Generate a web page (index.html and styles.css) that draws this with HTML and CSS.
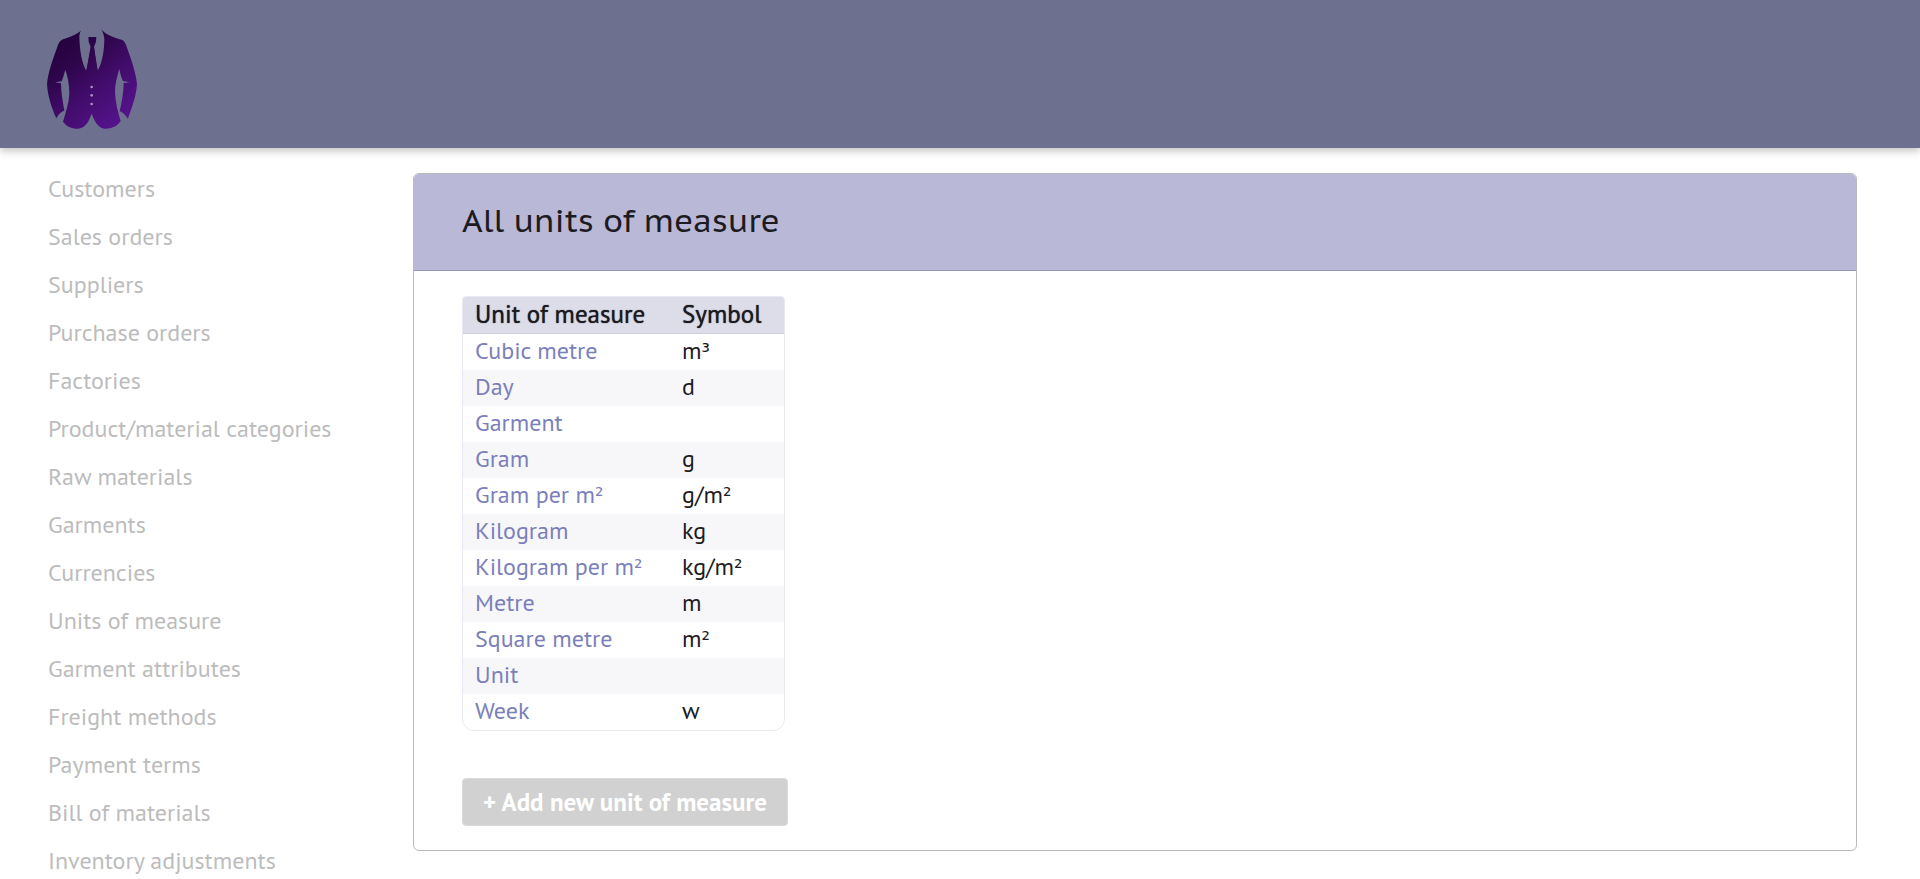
FILE: index.html
```html
<!DOCTYPE html>
<html lang="en">
<head>
<meta charset="utf-8">
<title>All units of measure</title>
<link rel="stylesheet" href="styles.css">
</head>
<body>
<header class="topbar">
  <a class="logo" href="#" aria-label="Home">
    <svg class="logo-art" viewBox="50 42 270 300" aria-hidden="true">
      <defs>
        <linearGradient id="cloth" gradientUnits="userSpaceOnUse" x1="80" y1="80" x2="270" y2="320">
          <stop offset="0" stop-color="#25023f"/>
          <stop offset=".25" stop-color="#2d0549"/>
          <stop offset=".6" stop-color="#420c6c"/>
          <stop offset="1" stop-color="#55138c"/>
        </linearGradient>
      </defs>
      <g fill="url(#cloth)">
        <path d="M156 42 C150 48 147 56 147 66 C148 104 154 144 168 167 C173 148 177 120 181 96 L175 80 L174 66 L198 66 L197 80 L191 96 C194 122 198 148 202 167 C216 144 222 104 222 72 C221 60 217 50 212 42 C226 60 252 68 274 74 C282 77 287 86 290 98 C302 132 315 166 320 206 C318 244 304 278 293 311 C286 304 280 292 268 289 C274 262 280 232 280 204 L298 202 L278 198 C272 186 270 176 267 162 C260 184 254 210 254 230 C255 262 263 292 271 318 C262 334 242 342 222 341 C200 336 192 316 184 296 C176 316 168 338 144 341 C126 342 108 334 98 320 C106 292 116 264 117 236 C117 208 112 184 105 164 C101 176 99 188 94 199 L74 202 L92 205 C92 234 98 262 102 287 C90 290 84 300 78 310 C64 278 52 244 50 206 C54 168 68 132 80 98 C84 86 88 77 98 73 C118 66 144 58 156 42 Z"/>
        <path d="M168 167 L181 96 L191 96 L202 167 L196 190 L174 190 Z"/>
      </g>
      <g fill="#a58fc4"><circle cx="184" cy="216" r="4"/><circle cx="184" cy="241" r="4"/><circle cx="184" cy="267" r="4"/></g>
    </svg>
  </a>
</header>
<div class="layout">
  <nav class="sidebar" aria-label="Main">
    <a href="#">Customers</a>
    <a href="#">Sales orders</a>
    <a href="#">Suppliers</a>
    <a href="#">Purchase orders</a>
    <a href="#">Factories</a>
    <a href="#">Product/material categories</a>
    <a href="#">Raw materials</a>
    <a href="#">Garments</a>
    <a href="#">Currencies</a>
    <a href="#">Units of measure</a>
    <a href="#">Garment attributes</a>
    <a href="#">Freight methods</a>
    <a href="#">Payment terms</a>
    <a href="#">Bill of materials</a>
    <a href="#">Inventory adjustments</a>
  </nav>
  <main class="panel">
    <div class="panel-head"><h1>All units of measure</h1></div>
    <div class="panel-body">
      <table class="units">
        <thead><tr><th scope="col">Unit of measure</th><th scope="col">Symbol</th></tr></thead>
        <tbody>
          <tr><td><a href="#">Cubic metre</a></td><td>m<span class="power">³</span></td></tr>
          <tr><td><a href="#">Day</a></td><td>d</td></tr>
          <tr><td><a href="#">Garment</a></td><td></td></tr>
          <tr><td><a href="#">Gram</a></td><td>g</td></tr>
          <tr><td><a href="#">Gram per m<span class="power">²</span></a></td><td>g/m<span class="power">²</span></td></tr>
          <tr><td><a href="#">Kilogram</a></td><td>kg</td></tr>
          <tr><td><a href="#">Kilogram per m<span class="power">²</span></a></td><td>kg/m<span class="power">²</span></td></tr>
          <tr><td><a href="#">Metre</a></td><td>m</td></tr>
          <tr><td><a href="#">Square metre</a></td><td>m<span class="power">²</span></td></tr>
          <tr><td><a href="#">Unit</a></td><td></td></tr>
          <tr><td><a href="#">Week</a></td><td>w</td></tr>
        </tbody>
      </table>
      <button class="add" type="button">+ Add new unit of measure</button>
    </div>
  </main>
</div>
</body>
</html>
```
FILE: styles.css
```css
* { box-sizing: border-box; }

body {
  margin: 0;
  background: #fff;
  color: #1c1b22;
  font-family: "PT Sans", "Noto Sans", sans-serif;
  font-size: 24px;
  line-height: 36px;
}

a { text-decoration: none; }

.topbar {
  display: flex;
  padding: 29px 47px 19px;
  background: #6d708f;
  box-shadow: 0 3px 8px rgba(60, 55, 45, 0.3);
}

.logo { display: flex; }
.logo-art { width: 90px; height: 100px; }

.layout {
  display: grid;
  grid-template-columns: 413px 1fr;
  align-items: start;
  padding-right: 63px;
}

.sidebar {
  display: flex;
  flex-direction: column;
  padding: 17px 0 0 48px;
}

.sidebar a {
  color: #bcbcbc;
  line-height: 48px;
  white-space: nowrap;
}

.panel {
  margin: 25px 0 29px;
  border: 1px solid #b9b9bf;
  border-radius: 6px;
  overflow: hidden;
}

.panel-head {
  padding: 22px 48px 26px;
  background: #b9b8d7;
  border-bottom: 1px solid #9795bd;
}

.panel-head h1 {
  margin: 0;
  font-family: "PT Sans Caption", "PT Sans", "Noto Sans", sans-serif;
  font-size: 32px;
  font-weight: 400;
  line-height: 48px;
}

.panel-body {
  display: flex;
  flex-direction: column;
  align-items: flex-start;
  gap: 47px;
  padding: 25px 48px 24px;
}

.units {
  width: 323px;
  table-layout: fixed;
  border: 1px solid #e9e9f1;
  border-radius: 4px 4px 12px 12px;
  border-spacing: 0;
  overflow: hidden;
}

.units th,
.units td {
  height: 36px;
  padding: 0 12px 2px;
  line-height: 34px;
  text-align: left;
  white-space: nowrap;
}

.units th {
  height: 37px;
  background: #dddce9;
  border-bottom: 1px solid #cfcee0;
  font-size: 25px;
  font-weight: 500;
  text-shadow: 0 0 1px currentColor;
}

.units th:first-child { width: 207px; }
.units tbody tr:nth-child(even) { background: #f7f7fa; }
.units a { color: #7b7fba; }

.power {
  font-family: "DejaVu Sans", sans-serif;
  font-size: 21px;
  line-height: 1;
}

.add {
  padding: 5px 20px;
  border: 1px solid #dadada;
  border-radius: 4px;
  background: #d1d1d1;
  color: #fff;
  font: inherit;
  font-size: 25px;
  font-weight: 600;
}
```
